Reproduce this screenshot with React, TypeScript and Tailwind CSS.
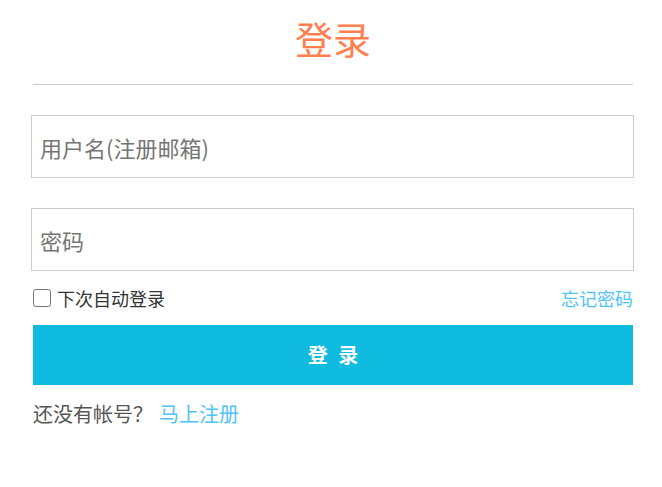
import { useState } from "react"

const cjk = "font-['Microsoft_YaHei','Noto_Sans_CJK_SC',sans-serif]"

export default function App() {
  const [remember, setRemember] = useState(false)

  return (
    <div className={`w-[662px] h-[487px] bg-white ${cjk}`}>
      <div className="w-[600px] ml-[33px]">
        <h1 className="h-[76px] leading-[76px] text-center text-[38px] text-[#ff7f50]">登录</h1>
        <div className="mt-[8px] h-px bg-[#cccccc]" />

        <input
          type="text"
          placeholder="用户名(注册邮箱)"
          className="block mt-[30px] -ml-[2px] w-[603px] h-[63px] border border-[#cccccc] pl-[8px] text-[22px] text-[#333] placeholder:text-[#757575] outline-none"
        />
        <input
          type="password"
          placeholder="密码"
          className="block mt-[30px] -ml-[2px] w-[603px] h-[63px] border border-[#cccccc] pl-[8px] text-[22px] text-[#333] placeholder:text-[#757575] outline-none"
        />

        <div className="mt-[13px] h-[28px] flex items-center justify-between text-[18px]">
          <label className="flex items-center gap-[6px] text-[#333]">
            <input
              type="checkbox"
              checked={remember}
              onChange={() => setRemember(!remember)}
              className="m-0 w-[18px] h-[18px]"
            />
            下次自动登录
          </label>
          <a className="text-[#4fc3f7] cursor-pointer">忘记密码</a>
        </div>

        <button className="mt-[13px] w-[600px] h-[60px] bg-[#10bbe0] text-white text-[20px] font-bold tracking-[3px] pl-[3px]">
          登 录
        </button>

        <p className="mt-[14px] h-[30px] leading-[30px] text-[20px] text-[#555]">
          还没有帐号？<a className="ml-[6px] text-[#4fc3f7] cursor-pointer">马上注册</a>
        </p>
      </div>
    </div>
  )
}
